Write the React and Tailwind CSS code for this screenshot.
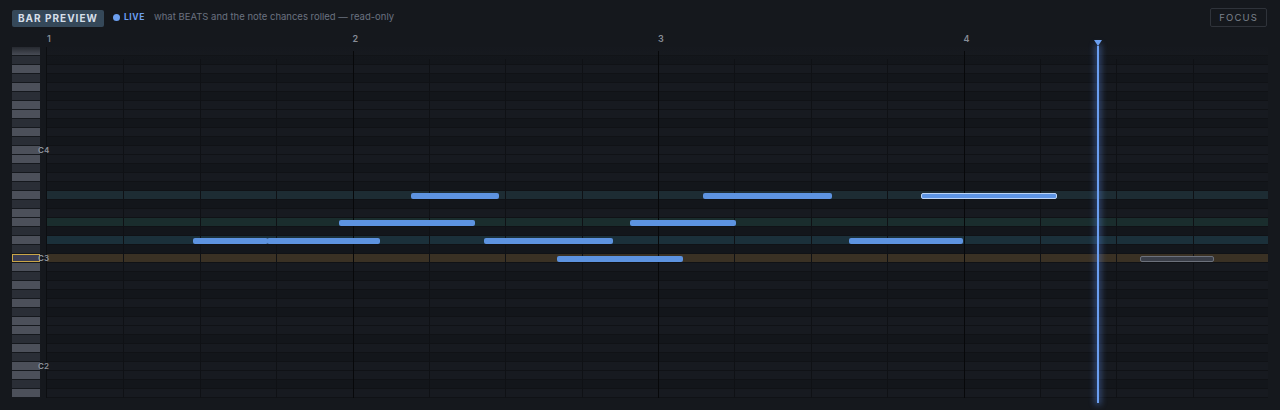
import React from 'react';

const BEAT = 305.5;
const NAMES = ['C', 'C#', 'D', 'D#', 'E', 'F', 'F#', 'G', 'G#', 'A', 'A#', 'B'];

// B4 (71) down to A1 (33)
const rows = [];
for (let m = 71; m >= 33; m--) {
  const pc = m % 12;
  rows.push({ midi: m, name: NAMES[pc] + (Math.floor(m / 12) - 1), black: NAMES[pc].includes('#') });
}

const bands = {
  55: 'bg-[#1d2c33]',
  52: 'bg-[#1a2d2d]',
  50: 'bg-[#1b303a]',
  48: 'bg-[#3a3124]',
};

const notes = [
  { midi: 55, x: 364, w: 88 },
  { midi: 55, x: 656, w: 129 },
  { midi: 55, x: 874, w: 136, selected: true },
  { midi: 52, x: 292, w: 136 },
  { midi: 52, x: 583, w: 106 },
  { midi: 50, x: 146, w: 75 },
  { midi: 50, x: 220, w: 113 },
  { midi: 50, x: 437, w: 129 },
  { midi: 50, x: 802, w: 114 },
  { midi: 48, x: 510, w: 126 },
  { midi: 48, x: 1093, w: 74, ghost: true },
];

const rowIndex = (midi) => 71 - midi;

function Keyboard() {
  return (
    <div className="relative z-10 w-[28px] shrink-0 flex flex-col">
      {rows.map((r) => (
        <div key={r.midi} className="h-[9px] pb-px">
          <div
            className={
              r.midi === 48
                ? 'h-full border border-[#c9a548] bg-[#3b3d52]'
                : r.black
                ? 'h-full bg-[#2a2e36]'
                : 'h-full bg-[#4c505a]'
            }
          />
        </div>
      ))}
      <div className="absolute left-0 right-0 top-0 h-[9px] bg-gradient-to-b from-[#15181d] to-transparent opacity-70" />
      {[60, 48, 36].map((m) => (
        <span
          key={m}
          className="absolute left-[26px] text-[8px] leading-[9px] font-semibold text-[#8d929b]"
          style={{ top: rowIndex(m) * 9 }}
        >
          {m === 60 ? 'C4' : m === 48 ? 'C3' : 'C2'}
        </span>
      ))}
    </div>
  );
}

function Grid() {
  const sub = [];
  for (let i = 1; i < 16; i++) sub.push(i);
  return (
    <div className="relative flex-1 flex flex-col border-l border-[#0c0e11]">
      {rows.map((r) => (
        <div
          key={r.midi}
          className={
            'h-[9px] border-b border-[#101216] ' +
            (bands[r.midi] ? bands[r.midi] : r.black ? 'bg-[#13161b]' : 'bg-[#171a20]')
          }
        />
      ))}
      <div className="absolute left-0 right-0 top-0 h-[14px] bg-gradient-to-b from-[#15181d] to-transparent opacity-80" />
      {sub.map((i) => (
        <div
          key={i}
          className={
            i % 4 === 0
              ? 'absolute top-[4px] bottom-0 w-px bg-[#07080a]'
              : 'absolute top-[12px] bottom-0 w-px bg-[#0f1115]'
          }
          style={{ left: (i * BEAT) / 4 }}
        />
      ))}
      {notes.map((n, i) => (
        <div
          key={i}
          className={
            'absolute h-[6px] rounded-[2px] ' +
            (n.ghost
              ? 'bg-[#3a3e48] border border-[#6c717c]'
              : n.selected
              ? 'bg-[#5e95e4] border border-[#b9d3f5]'
              : 'bg-[#5d93e0]')
          }
          style={{ left: n.x, width: n.w, top: rowIndex(n.midi) * 9 + 1.5 }}
        />
      ))}
    </div>
  );
}

export default function App() {
  return (
    <div className="w-[1280px] h-[410px] bg-[#15181d] overflow-hidden font-['Inter',sans-serif] relative">
      <div className="flex items-center justify-between pl-3 pr-[13px] pt-2">
        <div className="flex items-center">
          <span className="h-[17px] mt-px px-[6px] bg-[#354859] text-[#d6dfe9] text-[10px] leading-[17px] font-bold tracking-[0.1em] rounded-[2px]">
            BAR PREVIEW
          </span>
          <span className="ml-[9px] w-[7px] h-[7px] rounded-full bg-[#6c9ff0]" />
          <span className="ml-[4px] text-[8.5px] font-bold tracking-[0.07em] text-[#6c9ff0]">LIVE</span>
          <span className="ml-[9px] text-[9.5px] text-[#6b7280]">what BEATS and the note chances rolled — read-only</span>
        </div>
        <div className="h-[19px] px-[8px] border border-[#2f333a] rounded-[2px] text-[9.5px] leading-[17px] tracking-[0.12em] text-[#7c828c]">
          FOCUS
        </div>
      </div>
      <div className="relative ml-[46px] mr-3 h-[22px]">
        {[1, 2, 3, 4].map((b) => (
          <span
            key={b}
            className="absolute top-[5px] text-[9px] font-semibold text-[#878d97]"
            style={{ left: (b - 1) * BEAT + 1 }}
          >
            {b}
          </span>
        ))}
      </div>
      <div className="relative flex pl-3 pr-3 mt-[-2px]">
        <Keyboard />
        <div className="w-[6px] shrink-0" />
        <Grid />
        <div className="absolute left-[1095px] top-[-7px] h-[363px] w-[5px] flex flex-col items-center">
          <div className="w-0 h-0 border-l-[4px] border-r-[4px] border-t-[6px] border-l-transparent border-r-transparent border-t-[#6ea2f2]" />
          <div className="flex-1 w-[2px] bg-[#6a9ef0] shadow-[0_0_6px_2px_rgba(90,140,230,0.45)]" />
        </div>
      </div>
    </div>
  );
}
